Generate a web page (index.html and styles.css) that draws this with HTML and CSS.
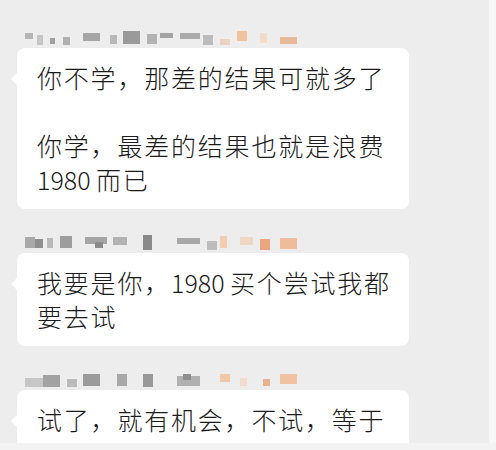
FILE: index.html
```html
<!DOCTYPE html>
<html lang="zh-CN">
<head>
  <meta charset="UTF-8">
  <title>聊天记录</title>
  <link rel="stylesheet" href="styles.css">
</head>
<body>
  <div class="screen">
    <div class="chat">
      <div class="msg first">
        <svg class="name" width="285" height="17" viewBox="0 0 285 17">
          <rect x="5" y="4" width="8" height="6" fill="#b5b5b5"/>
          <rect x="17" y="6" width="6" height="10" fill="#c4c4c4"/>
          <rect x="30" y="9" width="5" height="6" fill="#a0a0a0"/>
          <rect x="43" y="8" width="7" height="8" fill="#b0b0b0"/>
          <rect x="63" y="4" width="17" height="8" fill="#a6a6a6"/>
          <rect x="90" y="6" width="7" height="9" fill="#b8b8b8"/>
          <rect x="103" y="2" width="17" height="13" fill="#9a9a9a"/>
          <rect x="127" y="5" width="10" height="10" fill="#b3b3b3"/>
          <rect x="140" y="4" width="13" height="5" fill="#a3a3a3"/>
          <rect x="160" y="4" width="20" height="6" fill="#aaaaaa"/>
          <rect x="183" y="6" width="10" height="10" fill="#bdbdbd"/>
          <rect x="200" y="10" width="10" height="6" fill="#e8d3c5"/>
          <rect x="217" y="2" width="10" height="10" fill="#f0c29e"/>
          <rect x="240" y="4" width="7" height="10" fill="#f3dccb"/>
          <rect x="260" y="8" width="17" height="7" fill="#e9b896"/>
        </svg>
        <div class="bubble">
          <p>你不学，那差的结果可就多了</p>
          <p class="gap">你学，最差的结果也就是浪费</p>
          <p><span class="num">1980 </span>而已</p>
        </div>
      </div>

      <div class="msg">
        <svg class="name" width="285" height="17" viewBox="0 0 285 17">
          <rect x="5" y="3" width="10" height="11" fill="#a9a9a9"/>
          <rect x="15" y="5" width="8" height="9" fill="#8f8f8f"/>
          <rect x="27" y="4" width="6" height="10" fill="#b9b9b9"/>
          <rect x="40" y="2" width="12" height="12" fill="#9d9d9d"/>
          <rect x="65" y="3" width="22" height="7" fill="#a5a5a5"/>
          <rect x="75" y="8" width="8" height="6" fill="#8c8c8c"/>
          <rect x="93" y="3" width="14" height="8" fill="#b2b2b2"/>
          <rect x="123" y="1" width="9" height="15" fill="#8a8a8a"/>
          <rect x="157" y="4" width="23" height="6" fill="#a8a8a8"/>
          <rect x="187" y="7" width="10" height="9" fill="#bdbdbd"/>
          <rect x="200" y="2" width="7" height="12" fill="#f2cdb2"/>
          <rect x="220" y="3" width="13" height="8" fill="#f0d6c4"/>
          <rect x="240" y="5" width="10" height="11" fill="#eaa77f"/>
          <rect x="260" y="4" width="17" height="11" fill="#efbc9b"/>
        </svg>
        <div class="bubble">
          <p>我要是你，<span class="num">1980 </span>买个尝试我都</p>
          <p>要去试</p>
        </div>
      </div>

      <div class="msg">
        <svg class="name" width="285" height="17" viewBox="0 0 285 17">
          <rect x="5" y="7" width="18" height="9" fill="#c6c6c6"/>
          <rect x="23" y="4" width="17" height="12" fill="#a2a2a2"/>
          <rect x="47" y="8" width="10" height="8" fill="#bcbcbc"/>
          <rect x="63" y="3" width="17" height="12" fill="#9b9b9b"/>
          <rect x="97" y="3" width="10" height="12" fill="#a8a8a8"/>
          <rect x="123" y="3" width="10" height="13" fill="#999999"/>
          <rect x="157" y="5" width="23" height="10" fill="#b0b0b0"/>
          <rect x="163" y="3" width="8" height="6" fill="#8e8e8e"/>
          <rect x="200" y="3" width="10" height="8" fill="#f1c7a8"/>
          <rect x="220" y="7" width="7" height="8" fill="#f4dccc"/>
          <rect x="243" y="8" width="7" height="7" fill="#eab18d"/>
          <rect x="260" y="3" width="17" height="10" fill="#f0c2a2"/>
        </svg>
        <div class="bubble">
          <p>试了，就有机会，不试，等于</p>
        </div>
      </div>
    </div>
    <div class="edge"></div>
  </div>
  <div class="foot"></div>
</body>
</html>
```

FILE: styles.css
```css
body {
  margin: 0;
  background-color: #f4f4f4;
  font-family: "Noto Sans CJK SC", "Noto Sans", sans-serif;
  color: #1b1b1b;
}

.screen {
  display: flex;
  height: 443px;
}

.chat {
  width: 489px;
  height: 443px;
  overflow: hidden;
  background-color: #ededed;
}

.edge {
  width: 7px;
  background-color: #f7f7f7;
}

.foot {
  height: 7px;
  background-color: #f3f3f3;
}

.msg {
  margin-top: 25px;
}

.msg.first {
  margin-top: 29px;
}

.name {
  display: block;
  margin-left: 20px;
  filter: blur(0.6px);
}

.bubble {
  position: relative;
  margin-left: 17px;
  margin-top: 2px;
  width: 352px;
  padding: 12px 20px 13px;
  background-color: #ffffff;
  border-radius: 8px;
  font-size: 25px;
  font-weight: 300;
  letter-spacing: 1.8px;
  line-height: 34px;
  white-space: nowrap;
}

.bubble p {
  margin: 0;
  height: 34px;
}

.bubble p.gap {
  margin-top: 34px;
}

.bubble .num {
  letter-spacing: 0;
}

.bubble::before {
  content: "";
  position: absolute;
  left: -6px;
  top: 25px;
  border-top: 6px solid transparent;
  border-bottom: 6px solid transparent;
  border-right: 6px solid #ffffff;
}
```
